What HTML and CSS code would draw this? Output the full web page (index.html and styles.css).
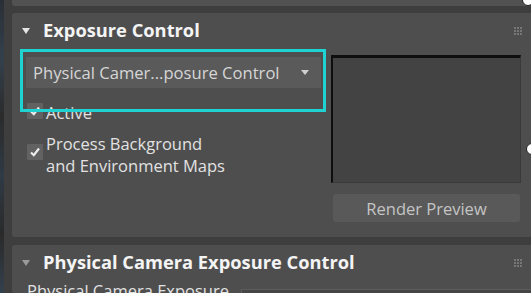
FILE: index.html
```html
<!DOCTYPE html>
<html>
<head>
<meta charset="utf-8">
<link rel="stylesheet" href="styles.css">
</head>
<body>
<div class="app">
  <div class="edge"></div>
  <div class="main">
    <div class="prev-panel"></div>
    <section class="panel panel-one">
      <header class="panel-head">
        <span class="tri"></span>
        <span class="title">Exposure Control</span>
        <span class="grip"><i></i><i></i><i></i><i></i><i></i><i></i><i></i><i></i><i></i></span>
      </header>
      <div class="panel-body">
        <div class="left-col">
          <div class="dropdown">
            <span class="dd-text">Physical Camer...posure Control</span>
            <span class="dd-arrow"></span>
            <div class="highlight"></div>
          </div>
          <label class="check-row row-active">
            <span class="box"><svg viewBox="0 0 16 16" width="16" height="16"><path d="M4 8.5 L6.8 11.2 L12 4.5" fill="none" stroke="#ececec" stroke-width="2.2"/></svg></span>
            <span class="label">Active</span>
          </label>
          <label class="check-row row-process">
            <span class="box"><svg viewBox="0 0 16 16" width="16" height="16"><path d="M4 8.5 L6.8 11.2 L12 4.5" fill="none" stroke="#ececec" stroke-width="2.2"/></svg></span>
            <span class="label">Process Background<br>and Environment Maps</span>
          </label>
        </div>
        <div class="right-col">
          <div class="preview"></div>
          <button class="btn">Render Preview</button>
        </div>
      </div>
    </section>
    <section class="panel panel-two">
      <header class="panel-head">
        <span class="tri dim"></span>
        <span class="title">Physical Camera Exposure Control</span>
        <span class="grip"><i></i><i></i><i></i><i></i><i></i><i></i><i></i><i></i><i></i></span>
      </header>
      <div class="panel-body two">
        <span class="sub">Physical Camera Exposure</span>
        <span class="field"></span>
      </div>
    </section>
  </div>
  <span class="handle h1"></span>
  <span class="handle h2"></span>
</div>
</body>
</html>
```
FILE: styles.css
```css
html, body {
  margin: 0;
  padding: 0;
}
body {
  width: 531px;
  height: 293px;
  overflow: hidden;
  background: #3e3e3e;
  font-family: "Open Sans", "Noto Sans", sans-serif;
  color: #e0e0e0;
}
.app {
  position: relative;
  display: flex;
  height: 293px;
}
.edge {
  width: 4px;
  flex: none;
  background: linear-gradient(180deg, #2a2f36 0%, #33404c 20%, #2b2b2b 40%, #2f3a45 60%, #2a2a2a 80%, #34404e 100%);
}
.main {
  flex: 1;
  display: flex;
  flex-direction: column;
  padding-left: 8px;
  margin-right: -6px;
}
.prev-panel {
  height: 6px;
  flex: none;
  background: #525252;
  border-radius: 0 0 0 3px;
  margin-bottom: 7px;
}
.panel {
  background: #4e4e4e;
  border-radius: 3px 0 0 3px;
  flex: none;
}
.panel-one {
  height: 224px;
  margin-bottom: 8px;
}
.panel-two {
  flex: 1;
  min-height: 0;
}
.panel-head {
  display: flex;
  align-items: center;
  height: 34px;
  padding-left: 10px;
}
.tri {
  width: 0;
  height: 0;
  border-left: 4px solid transparent;
  border-right: 4px solid transparent;
  border-top: 6px solid #e6e6e6;
  margin-top: 1px;
}
.tri.dim {
  border-top-color: #9a9a9a;
}
.title {
  margin-left: 13px;
  margin-top: -2px;
  font-weight: 700;
  font-size: 18.3px;
  color: #f4f4f4;
  flex: 1;
  white-space: nowrap;
}
.grip {
  display: grid;
  grid-template-columns: repeat(3, 2px);
  grid-template-rows: repeat(3, 2px);
  gap: 1px 1px;
  margin-right: 15px;
  margin-top: 1px;
}
.grip i {
  background: #777;
}
.panel-body {
  display: flex;
  padding-left: 14px;
}
.left-col {
  width: 295px;
  display: flex;
  flex-direction: column;
}
.dropdown {
  position: relative;
  margin-top: 10px;
  height: 31px;
  background: #5a5a5a;
  display: flex;
  align-items: center;
  padding-left: 7px;
  padding-right: 12px;
}
.dd-text {
  flex: 1;
  font-size: 16.6px;
  color: #d6d6d6;
  white-space: nowrap;
}
.dd-arrow {
  width: 0;
  height: 0;
  border-left: 4px solid transparent;
  border-right: 4px solid transparent;
  border-top: 5px solid #d0d0d0;
}
.highlight {
  position: absolute;
  left: -6px;
  top: -8px;
  width: 300px;
  height: 57px;
  border: 3px solid #1fd3d3;
  pointer-events: none;
}
.check-row {
  display: flex;
  align-items: flex-start;
  margin-left: 1px;
}
.row-active {
  margin-top: 15px;
  align-items: flex-start;
}
.row-process {
  margin-top: 9px;
}
.row-process .box {
  margin-top: 11px;
}
.box {
  width: 16px;
  height: 16px;
  background: #626262;
  border-radius: 1px;
  flex: none;
  display: block;
}
.box svg {
  display: block;
}
.label {
  margin-left: 3px;
  font-size: 16.5px;
  line-height: 22px;
  color: #e2e2e2;
  white-space: nowrap;
}
.row-active .label {
  margin-top: -1px;
}
.right-col {
  margin-left: 10px;
  width: 190px;
  display: flex;
  flex-direction: column;
}
.preview {
  margin-top: 8px;
  height: 124px;
  background: #434343;
  border-top: 3px solid #0e0e0e;
  border-left: 2px solid #0e0e0e;
  border-right: 1px solid #3a3a3a;
  border-bottom: 1px solid #3a3a3a;
}
.btn {
  margin-top: 11px;
  margin-left: 2px;
  width: 187px;
  height: 28px;
  border: none;
  border-radius: 3px;
  background: #595959;
  color: #c4c4c4;
  font-family: "Open Sans", "Noto Sans", sans-serif;
  font-size: 16.5px;
  padding: 0;
}
.panel-body.two {
  align-items: flex-start;
  padding-left: 15px;
  padding-top: 1px;
}
.sub {
  font-size: 16.5px;
  line-height: 22px;
  color: #e2e2e2;
  white-space: nowrap;
}
.field {
  margin-left: 12px;
  margin-top: 9px;
  flex: 1;
  height: 20px;
  border-top: 1px solid #5c5c5c;
  border-left: 1px solid #5c5c5c;
  background: #454545;
}
.handle {
  position: absolute;
  width: 10px;
  height: 10px;
  border-radius: 50%;
  background: #fff;
  border: 1px solid #222;
}
.h1 {
  left: 522px;
  top: -6px;
}
.h2 {
  left: 526px;
  top: 143px;
}
```
